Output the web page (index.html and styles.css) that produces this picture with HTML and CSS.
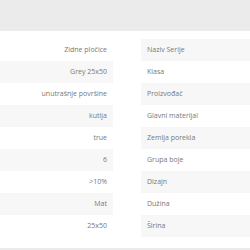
FILE: index.html
```html
<!DOCTYPE html>
<html>
<head>
<meta charset="utf-8">
<link rel="stylesheet" href="styles.css">
</head>
<body>
<div class="topbar"></div>
<div class="specs">
  <div class="col col-left">
    <div class="cell">Zidne pločice</div>
    <div class="cell alt">Grey 25x50</div>
    <div class="cell">unutrašnje površine</div>
    <div class="cell alt">kutija</div>
    <div class="cell">true</div>
    <div class="cell alt">6</div>
    <div class="cell">&gt;10%</div>
    <div class="cell alt">Mat</div>
    <div class="cell">25x50</div>
  </div>
  <div class="col col-right">
    <div class="cell alt">Naziv Serije</div>
    <div class="cell">Klasa</div>
    <div class="cell alt">Proizvođač</div>
    <div class="cell">Glavni materijal</div>
    <div class="cell alt">Zemlja porekla</div>
    <div class="cell">Grupa boje</div>
    <div class="cell alt">Dizajn</div>
    <div class="cell">Dužina</div>
    <div class="cell alt">Širina</div>
  </div>
</div>
<div class="bottombar"></div>
</body>
</html>
```
FILE: styles.css
```css
html, body {
  margin: 0;
  padding: 0;
  background: #ffffff;
}
body {
  font-family: "Open Sans", "DejaVu Sans", sans-serif;
  font-size: 7px;
  color: #777777;
  width: 250px;
  height: 250px;
  overflow: hidden;
}
.topbar {
  height: 31px;
  background: #ebebeb;
}
.specs {
  display: grid;
  grid-template-columns: 113px 1fr;
  column-gap: 28px;
  padding-top: 8px;
}
.col {
  display: flex;
  flex-direction: column;
}
.cell {
  height: 22px;
  line-height: 22px;
  white-space: nowrap;
}
.cell.alt {
  background: #f7f7f7;
}
.col-left .cell {
  text-align: right;
  padding-right: 6px;
}
.col-right .cell {
  padding-left: 6px;
}
.bottombar {
  margin-top: 11px;
  height: 10px;
  background: #ebebeb;
}
```
